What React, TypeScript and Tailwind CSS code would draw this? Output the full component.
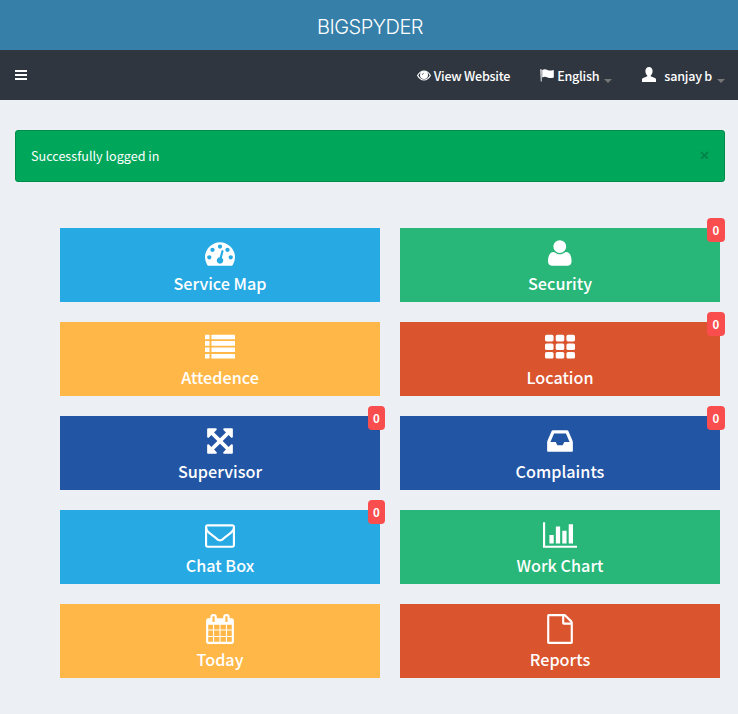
import type { ReactNode } from "react";

const sans = "font-['Noto_Sans_CJK_JP','Noto_Sans_CJK_SC','Open_Sans',sans-serif]";

// Icons are drawn on a 1792-unit em square, rendered at 30px.
function Glyph({ width = 1792, children }: { width?: number; children: ReactNode }) {
  return (
    <svg
      className="block h-[30px]"
      style={{ width: (width * 30) / 1792 }}
      viewBox={`0 0 ${width} 1792`}
      fill="currentColor"
      aria-hidden="true"
    >
      {children}
    </svg>
  );
}

const Dashboard = () => (
  <Glyph>
    <path d="M384 1152q0-53-37.5-90.5t-90.5-37.5-90.5 37.5-37.5 90.5 37.5 90.5 90.5 37.5 90.5-37.5 37.5-90.5zm192-448q0-53-37.5-90.5t-90.5-37.5-90.5 37.5-37.5 90.5 37.5 90.5 90.5 37.5 90.5-37.5 37.5-90.5zm428 481l101-382q6-26-7.5-48.5t-38.5-29.5-48 6.5-30 39.5l-101 382q-60 5-107 43.5t-63 98.5q-20 77 20 146t117 89 146-20 89-117q16-60-6-117t-72-91zm660-33q0-53-37.5-90.5t-90.5-37.5-90.5 37.5-37.5 90.5 37.5 90.5 90.5 37.5 90.5-37.5 37.5-90.5zm-640-640q0-53-37.5-90.5t-90.5-37.5-90.5 37.5-37.5 90.5 37.5 90.5 90.5 37.5 90.5-37.5 37.5-90.5zm448 192q0-53-37.5-90.5t-90.5-37.5-90.5 37.5-37.5 90.5 37.5 90.5 90.5 37.5 90.5-37.5 37.5-90.5zm320 448q0 261-141 483-19 29-54 29h-1402q-35 0-54-29-141-221-141-483 0-182 71-348t191-286 286-191 348-71 348 71 286 191 191 286 71 348z" />
  </Glyph>
);

const User = () => (
  <Glyph width={1408}>
    <g transform="translate(0 1536) scale(1 -1)">
      <path d="M1408 131q0 -120 -73 -189.5t-194 -69.5h-874q-121 0 -194 69.5t-73 189.5q0 53 3.5 103.5t14 109t26.5 108.5t43 97.5t62 81t85.5 53.5t111.5 20q9 0 42 -21.5t74.5 -48t108 -48t133.5 -21.5t133.5 21.5t108 48t74.5 48t42 21.5q61 0 111.5 -20t85.5 -53.5t62 -81t43 -97.5t26.5 -108.5t14 -109t3.5 -103.5zM1088 1024q0 -159 -112.5 -271.5t-271.5 -112.5t-271.5 112.5t-112.5 271.5t112.5 271.5t271.5 112.5t271.5 -112.5t112.5 -271.5z" />
    </g>
  </Glyph>
);

const List = () => (
  <Glyph>
    {[160, 544, 928, 1312].map((y) => (
      <g key={y}>
        <rect x="0" y={y} width="272" height="272" rx="32" />
        <rect x="384" y={y} width="1408" height="272" rx="32" />
      </g>
    ))}
  </Glyph>
);

const Grid = () => (
  <Glyph>
    {[170, 682, 1194].map((y) =>
      [0, 640, 1280].map((x) => (
        <rect key={`${x}-${y}`} x={x} y={y} width="512" height="394" rx="96" />
      )),
    )}
  </Glyph>
);

const Arrows = () => (
  <Glyph>
    <path d="M1411 541l-355 355 355 355 144-144q29-31 70-14 39 17 39 59v448q0 26-19 45t-45 19h-448q-42 0-59-40-17-39 14-69l144-144-355-355-355 355 144 144q31 30 14 69-17 40-59 40h-448q-26 0-45-19t-19-45v-448q0-42 40-59 39-17 69 14l144 144 355-355-355-355-144 144q-19 19-45 19-12 0-24-5-40-17-40-59v-448q0-26 19-45t45-19h448q42 0 59 40 17 39-14 69l-144 144 355 355 355-355-144-144q-31-30-14-69 17-40 59-40h448q26 0 45 19t19 45v448q0 42-39 59-13 5-25 5-26 0-45-19z" />
  </Glyph>
);

const Inbox = () => (
  <Glyph>
    <path d="M1151 960h316q-1-3-2.5-8t-2.5-8l-212-496h-708l-212 496q-1 2-2.5 8t-2.5 8h316l95 192h320zm513 30v482q0 26-19 45t-45 19h-1408q-26 0-45-19t-19-45v-482q0-62 25-123l238-552q10-25 36.5-42t52.5-17h832q26 0 52.5 17t36.5 42l238 552q25 61 25 123z" />
  </Glyph>
);

const Envelope = () => (
  <Glyph>
    <path d="M1664 1504v-768q-32 36-69 66-268 206-426 338-51 43-83 67t-86.5 48.5-102.5 24.5h-2q-48 0-102.5-24.5t-86.5-48.5-83-67q-158-132-426-338-37-30-69-66v768q0 13 9.5 22.5t22.5 9.5h1472q13 0 22.5-9.5t9.5-22.5zm0-1051v-24.5l-.5-13-3-12.5-5.5-9-9-7.5-14-2.5h-1472q-13 0-22.5 9.5t-9.5 22.5q0 168 147 284 193 152 401 317 6 5 35 29.5t46 37.5 44.5 31.5 50.5 27.5 43 9h2q20 0 43-9t50.5-27.5 44.5-31.5 46-37.5 35-29.5q208-165 401-317 54-43 100.5-115.5t46.5-131.5zm128-37v1088q0 66-47 113t-113 47h-1472q-66 0-113-47t-47-113v-1088q0-66 47-113t113-47h1472q66 0 113 47t47 113z" />
  </Glyph>
);

const BarChart = () => (
  <Glyph width={2048}>
    <path d="M640 896v512h-256v-512h256zm384-512v1024h-256v-1024h256zm1024 1152v128h-2048v-1536h128v1408h1920zm-640-896v768h-256v-768h256zm384-384v1152h-256v-1152h256z" />
  </Glyph>
);

const Calendar = () => (
  <Glyph>
    <path d="M192 1664h288v-288h-288v288zm352 0h320v-288h-320v288zm-352-352h288v-320h-288v320zm352 0h320v-320h-320v320zm-352-384h288v-288h-288v288zm736 736h320v-288h-320v288zm-384-736h320v-288h-320v288zm768 736h288v-288h-288v288zm-384-352h320v-320h-320v320zm-352-864v-288q0-13-9.5-22.5t-22.5-9.5h-64q-13 0-22.5 9.5t-9.5 22.5v288q0 13 9.5 22.5t22.5 9.5h64q13 0 22.5-9.5t9.5-22.5zm736 864h288v-320h-288v320zm-384-384h320v-288h-320v288zm384 0h288v-288h-288v288zm32-480v-288q0-13-9.5-22.5t-22.5-9.5h-64q-13 0-22.5 9.5t-9.5 22.5v288q0 13 9.5 22.5t22.5 9.5h64q13 0 22.5-9.5t9.5-22.5zm384-64v1280q0 52-38 90t-90 38h-1408q-52 0-90-38t-38-90v-1280q0-52 38-90t90-38h128v-96q0-66 47-113t113-47h64q66 0 113 47t47 113v96h384v-96q0-66 47-113t113-47h64q66 0 113 47t47 113v96h128q52 0 90 38t38 90z" />
  </Glyph>
);

const File = () => (
  <Glyph>
    <path d="M1596 380q28 28 48 76t20 88v1152q0 40-28 68t-68 28h-1344q-40 0-68-28t-28-68v-1600q0-40 28-68t68-28h896q40 0 88 20t76 48zm-444-244v376h376q-10-29-22-41l-313-313q-12-12-41-22zm384 1528v-1024h-416q-40 0-68-28t-28-68v-416h-768v1536h1280z" />
  </Glyph>
);

type Tile = { label: string; color: string; icon: ReactNode; count?: number };

const tiles: Tile[] = [
  { label: "Service Map", color: "bg-[#27a9e3]", icon: <Dashboard /> },
  { label: "Security", color: "bg-[#28b779]", icon: <User />, count: 0 },
  { label: "Attedence", color: "bg-[#ffb848]", icon: <List /> },
  { label: "Location", color: "bg-[#da542e]", icon: <Grid />, count: 0 },
  { label: "Supervisor", color: "bg-[#2255a4]", icon: <Arrows />, count: 0 },
  { label: "Complaints", color: "bg-[#2255a4]", icon: <Inbox />, count: 0 },
  { label: "Chat Box", color: "bg-[#27a9e3]", icon: <Envelope />, count: 0 },
  { label: "Work Chart", color: "bg-[#28b779]", icon: <BarChart /> },
  { label: "Today", color: "bg-[#ffb848]", icon: <Calendar /> },
  { label: "Reports", color: "bg-[#da542e]", icon: <File /> },
];

const Caret = () => (
  <span className="ml-[5px] mt-[11px] border-x-4 border-t-4 border-x-transparent border-t-[#777]" />
);

export default function App() {
  return (
    <div className={`min-h-[714px] w-[738px] bg-[#ecf0f5] ${sans}`}>
      <header>
        <div className="flex h-[50px] items-center justify-center bg-[#367fa9] pl-[2px] pt-[3px] font-['Inter','Liberation_Sans',sans-serif] text-[20px] font-light leading-[50px] tracking-[-0.5px] text-white">
          BIGSPYDER
        </div>
        <nav className="flex h-[50px] items-center bg-[#2f3640] pl-[15px] pr-[13px] text-[12.6px] font-medium leading-5 tracking-[-0.25px] text-white">
          <button className="flex w-3 flex-col gap-[2px]" aria-label="Toggle navigation">
            <span className="h-[2px] w-3 bg-white" />
            <span className="h-[2px] w-3 bg-white" />
            <span className="h-[2px] w-3 bg-white" />
          </button>
          <a className="ml-auto flex items-center">
            <svg className="mr-[3px] mt-px h-[11px] w-[14px]" viewBox="0 0 14 11" fill="none" aria-hidden="true">
              <path d="M.6 5.5C2 3 4.300 1 7 1s5 2 6.400 4.500C12 8 9.700 10 7 10S2 8 .6 5.500z" stroke="#fff" strokeWidth="1.200" />
              <circle cx="7" cy="5" r="4" fill="#fff" />
              <path d="M5.200 4.800A2 2 0 0 1 6.700 3.300" stroke="#2f3640" strokeWidth=".8" />
            </svg>
            <span className="mt-[2px]">View Website</span>
          </a>
          <a className="ml-[30px] flex items-center">
            <svg className="mr-[3px] h-[14px] w-[14px]" viewBox="0 0 14 14" fill="#fff" aria-hidden="true">
              <path d="M.3 1.500a.7.7 0 0 1 1.300 0V13.500H.8z" />
              <path d="M2.200 2c2-1.200 3.600-.9 5.300-.1s3.700.8 6.300 0v7.500c-2.500 1-4.500.8-6.300 0s-3.300-1-5.300.2z" />
            </svg>
            <span className="mt-[2px]">English</span>
            <Caret />
          </a>
          <a className="ml-[30px] flex items-center">
            <svg className="mb-px mr-2 h-[15px] w-[14px]" viewBox="0 0 14 15" fill="#fff" aria-hidden="true">
              <path d="M7 0c2.300 0 3.600 1.700 3.600 4 0 1.700-.7 3.300-1.700 4.200-.3.400-.2 1.200.3 1.400l3.700 1.500c.7.300 1.100.8 1.100 1.500V15H0v-2.400c0-.7.4-1.200 1.100-1.500l3.700-1.500c.5-.2.600-1 .3-1.400C4.100 7.300 3.400 5.700 3.400 4 3.400 1.700 4.700 0 7 0z" />
            </svg>
            <span className="mt-[2px]">sanjay b</span>
            <Caret />
          </a>
        </nav>
      </header>

      <main className="px-[15px] pr-[13px] pt-[30px]">
        <div className="flex h-[52px] items-center justify-between rounded-[3px] border border-[#008d4c] bg-[#00a65a] pl-[15px] pr-[15px] text-white">
          <span className="text-[12.6px] leading-5">Successfully logged in</span>
          <svg className="mb-[2px] h-[9px] w-[9px]" viewBox="0 0 9 9" aria-hidden="true">
            <path d="M1 2l7 7M8 2L1 9" stroke="#33b87b" strokeWidth="1" />
            <path d="M1 1l7 7M8 1L1 8" stroke="#00854a" strokeWidth="2" />
          </svg>
        </div>

        <div className="ml-[45px] mt-[46px] grid w-[660px] grid-cols-2 gap-5">
          {tiles.map((tile, i) => (
            <a
              key={tile.label}
              className={`relative flex h-[74px] flex-col items-center pt-[10px] text-white ${tile.color}`}
            >
              {tile.icon}
              <span className="mt-[3px] text-[16.2px] font-medium leading-6">{tile.label}</span>
              {tile.count !== undefined && (
                <span
                  className={`absolute -right-[5px] -top-[10px] flex h-6 items-center justify-center rounded-[4px] bg-[#fa4e4e] text-[11.5px] font-bold leading-6 ${i % 2 ? "w-[18px]" : "w-[17px]"}`}
                >
                  {tile.count}
                </span>
              )}
            </a>
          ))}
        </div>
      </main>
    </div>
  );
}
